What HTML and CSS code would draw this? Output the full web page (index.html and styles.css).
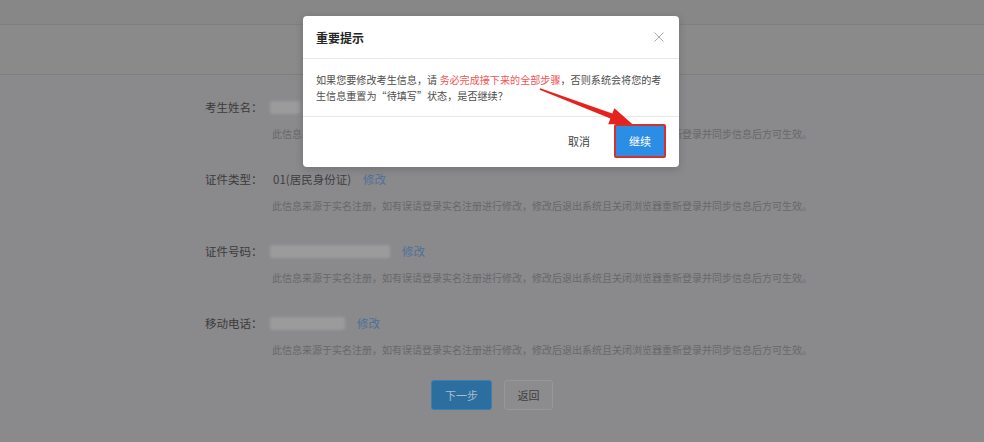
FILE: index.html
```html
<!DOCTYPE html>
<html lang="zh-CN">
<head>
<meta charset="utf-8">
<title>修改考生信息</title>
<link rel="stylesheet" href="styles.css">
</head>
<body>
<div class="page">
  <div class="topbar"></div>
  <div class="subbar"></div>
  <div class="form">
    <div class="field">
      <div class="line"><span class="label">考生姓名：</span><span class="mask mask-name"></span></div>
      <p class="note">此信息来源于实名注册，如有误请登录实名注册进行修改，修改后退出系统且关闭浏览器重新登录并同步信息后方可生效。</p>
    </div>
    <div class="field">
      <div class="line"><span class="label">证件类型：</span><span class="value">01(居民身份证)</span><a class="edit">修改</a></div>
      <p class="note">此信息来源于实名注册，如有误请登录实名注册进行修改，修改后退出系统且关闭浏览器重新登录并同步信息后方可生效。</p>
    </div>
    <div class="field">
      <div class="line"><span class="label">证件号码：</span><span class="mask mask-id"></span><a class="edit">修改</a></div>
      <p class="note">此信息来源于实名注册，如有误请登录实名注册进行修改，修改后退出系统且关闭浏览器重新登录并同步信息后方可生效。</p>
    </div>
    <div class="field last">
      <div class="line"><span class="label">移动电话：</span><span class="mask mask-phone"></span><a class="edit">修改</a></div>
      <p class="note">此信息来源于实名注册，如有误请登录实名注册进行修改，修改后退出系统且关闭浏览器重新登录并同步信息后方可生效。</p>
    </div>
    <div class="actions">
      <button class="btn btn-primary">下一步</button>
      <button class="btn btn-default">返回</button>
    </div>
  </div>
</div>

<div class="dialog">
  <div class="dialog-header">
    <span class="dialog-title">重要提示</span>
    <svg class="close" width="10" height="10" viewBox="0 0 10 10"><path d="M0.5 0.5L9.5 9.5M9.5 0.5L0.5 9.5" stroke="#a8a8a8" stroke-width="1" fill="none"/></svg>
  </div>
  <div class="dialog-body">如果您要修改考生信息，请 <span class="warn">务必完成接下来的全部步骤</span>，否则系统会将您的考生信息重置为“待填写”状态，是否继续？</div>
  <div class="dialog-footer">
    <button class="dbtn dbtn-cancel">取消</button>
    <button class="dbtn dbtn-ok">继续</button>
  </div>
</div>

<svg class="annot" width="984" height="442" viewBox="0 0 984 442">
  <polygon points="540.3,88.3 612.3,113.6 614.4,108.2 632.5,124.3 608.2,124.2 610.4,118.6 539.7,89.7" fill="#e4231d"/>
</svg>
</body>
</html>
```

FILE: styles.css
```css
* { box-sizing: border-box; }
html, body { margin: 0; padding: 0; }
body {
  width: 984px;
  height: 442px;
  overflow: hidden;
  background: #8a898c;
  font-family: "Noto Sans CJK SC", "Microsoft YaHei", "Noto Sans", sans-serif;
  position: relative;
}
.page { width: 984px; }
.topbar {
  height: 25px;
  background: #878787;
  border-bottom: 1px solid #7f7f7f;
}
.subbar {
  height: 50px;
  background: #8a8a8a;
  border-bottom: 1px solid #7e7e7e;
}
.form { padding-top: 22px; }
.field { padding-left: 205px; }
.line {
  display: flex;
  align-items: center;
  height: 20px;
  font-size: 11.5px;
}
.label {
  width: 65px;
  color: #3b3b3b;
  white-space: nowrap;
}
.value { color: #3e3e3e; margin-left: 3px; }
.edit {
  margin-left: 12px;
  color: #4f7098;
  cursor: pointer;
}
.mask {
  display: inline-block;
  height: 13px;
  background: #9b9b9c;
  border-radius: 2px;
  filter: blur(1.5px);
}
.mask-name { width: 30px; }
.mask-id { width: 120px; }
.mask-phone { width: 75px; }
.note {
  margin: 10px 0 28px 67px;
  font-size: 10px;
  line-height: 14px;
  color: #686868;
  white-space: nowrap;
}
.field.last .note { margin-bottom: 23px; }
.actions {
  display: flex;
  justify-content: center;
  gap: 12px;
}
.btn {
  height: 30px;
  border-radius: 3px;
  font-family: inherit;
  font-size: 11px;
  padding: 0;
}
.btn-primary {
  width: 61px;
  background: #2b6e9f;
  border: 1px solid #3b7fae;
  color: #a7bccd;
}
.btn-default {
  width: 49px;
  background: #8c8b8e;
  border: 1px solid #979699;
  color: #3e3e3e;
}

.dialog {
  position: absolute;
  left: 303px;
  top: 16px;
  width: 376px;
  height: 151px;
  background: #fff;
  border-radius: 4px;
  box-shadow: 0 2px 8px rgba(0, 0, 0, 0.18);
}
.dialog-header {
  height: 43px;
  padding: 0 15px 0 13px;
  border-bottom: 1px solid #e6e8eb;
  display: flex;
  align-items: center;
  justify-content: space-between;
}
.dialog-title {
  font-size: 12px;
  font-weight: bold;
  color: #262626;
}
.dialog-body {
  padding: 13px 13px 12px;
  font-size: 10.1px;
  line-height: 16px;
  color: #4d4d4d;
  border-bottom: 1px solid #e6e8eb;
}
.warn { color: #ef5656; }
.dialog-footer {
  display: flex;
  justify-content: flex-end;
  align-items: flex-start;
  gap: 12px;
  padding: 7px 13px 0 0;
}
.dbtn {
  height: 34px;
  font-family: inherit;
  font-size: 11px;
  padding: 0;
  cursor: pointer;
}
.dbtn-cancel {
  width: 46px;
  background: transparent;
  border: none;
  color: #444;
}
.dbtn-ok {
  width: 52px;
  background: #2b8de4;
  border: 2px solid #d6302b;
  border-radius: 2px;
  color: #fff;
}
.annot {
  position: absolute;
  left: 0;
  top: 0;
  pointer-events: none;
}
```
